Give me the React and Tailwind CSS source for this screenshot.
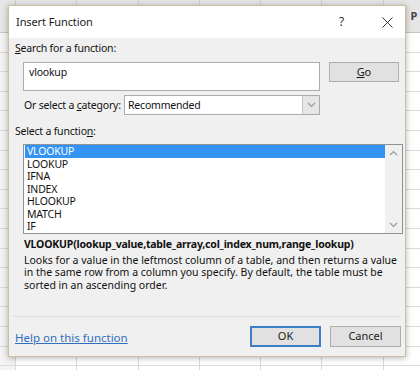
import React from 'react';

const cols = [0, 1, 2, 3, 4, 5, 6];
const rows = Array.from({ length: 18 }, (_, i) => i);

const functions = ['VLOOKUP', 'LOOKUP', 'IFNA', 'INDEX', 'HLOOKUP', 'MATCH', 'IF'];

const Chevron = ({ up }) => (
  <svg width="9" height="6" viewBox="0 0 9 6" fill="none">
    <path d={up ? 'M1 5 L4.5 1.5 L8 5' : 'M1 1 L4.5 4.5 L8 1'} stroke="#9a9a9a" strokeWidth="1.2" />
  </svg>
);

const Sheet = () => (
  <div className="absolute inset-0 flex flex-col bg-white">
    <div className="flex h-[33px] shrink-0 border-b border-[#c6c6c6] bg-[#e6e6e6]">
      <div className="w-[15px] shrink-0" />
      {cols.map((c) => (
        <div key={c} className="flex w-[61.3px] shrink-0 items-center justify-center border-l border-[#cfcfcf] text-[11px] font-bold text-[#444]">
          {c === 6 ? 'P' : ''}
        </div>
      ))}
    </div>
    {rows.map((r) => (
      <div key={r} className="flex h-[19.6px] shrink-0 border-b border-[#dadada]">
        <div className="w-[15px] shrink-0 bg-[#f3f3f3]" />
        {cols.map((c) => (
          <div key={c} className="w-[61.3px] shrink-0 border-l border-[#dadada]" />
        ))}
      </div>
    ))}
  </div>
);

const Button = ({ children, focused, className }) => (
  <div
    className={`flex items-center justify-center bg-[#e1e1e1] text-[11px] text-[#1b1b1b] ${
      focused ? 'border-2 border-[#3c7fc4]' : 'border border-[#adadad]'
    } ${className}`}
  >
    {children}
  </div>
);

const App = () => {
  return (
    <div
      className="relative h-[370px] w-[420px] overflow-hidden bg-white"
      style={{ fontFamily: '"Segoe UI", "Noto Sans", "Open Sans", sans-serif' }}
    >
      <Sheet />

      <div className="absolute left-[8px] top-[5px] flex h-[352px] w-[398px] flex-col border border-[#cdbf9f] bg-[#f0f0f0] shadow-[0_1px_6px_rgba(0,0,0,0.3)]">
        {/* title bar */}
        <div className="flex h-[32px] shrink-0 items-center bg-white pl-[7px] text-[11px] tracking-[-0.1px] text-[#1b1b1b]">
          <span>Insert Function</span>
          <span className="ml-auto mr-[38px] text-[12px] text-[#333]">?</span>
          <svg className="mr-[12px]" width="11" height="11" viewBox="0 0 11 11">
            <path d="M0.5 0.5 L10.5 10.5 M10.5 0.5 L0.5 10.5" stroke="#333" strokeWidth="1" />
          </svg>
        </div>

        <div className="flex flex-col whitespace-nowrap px-[6px] text-[10.5px] leading-[12.5px] tracking-[-0.2px] text-[#111]">
          <div className="mt-[4px] h-[13px]">
            <span className="underline">S</span>earch for a function:
          </div>

          <div className="mt-[7px] flex items-start">
            <div className="ml-[8px] h-[29px] w-[299px] border border-[#a9abb1] bg-white pl-[5px] pt-[3px]">vlookup</div>
            <Button className="ml-[9px] h-[20px] w-[71px]">
              <span className="underline">G</span>o
            </Button>
          </div>

          <div className="mt-[4px] flex h-[20px] items-center">
            <span className="ml-[9px]">
              Or select a <span className="underline">c</span>ategory:
            </span>
            <div className="ml-auto mr-[79px] flex h-[20px] w-[196px] items-center border border-[#a9abb1] bg-white">
              <span className="pl-[3px]">Recommended</span>
              <div className="ml-auto flex h-full w-[17px] items-center justify-center border-l border-[#c4c4c4] bg-[#e6e6e6]">
                <Chevron />
              </div>
            </div>
          </div>

          <div className="mt-[10px] h-[13px]">
            Select a functio<span className="underline">n</span>:
          </div>

          <div className="ml-[8px] mt-[6px] flex h-[90px] w-[380px] border border-[#8e9299] bg-white">
            <div className="flex flex-1 flex-col pl-[1px]">
              {functions.map((f, i) => (
                <div
                  key={f}
                  className={`h-[12.5px] pl-[2px] leading-[12.5px] ${i === 0 ? 'bg-[#3393f3] text-white' : ''}`}
                >
                  {f}
                </div>
              ))}
            </div>
            <div className="flex w-[17px] flex-col items-center justify-between bg-[#f0f0f0] py-[5px]">
              <Chevron up />
              <Chevron />
            </div>
          </div>

          <div className="ml-[9px] mt-[4px] font-bold">VLOOKUP(lookup_value,table_array,col_index_num,range_lookup)</div>
          <div className="ml-[9px] mt-[3px] tracking-normal">
            Looks for a value in the leftmost column of a table, and then returns a value
            <br />
            in the same row from a column you specify. By default, the table must be
            <br />
            sorted in an ascending order.
          </div>
        </div>

        <div className="mx-[4px] mt-auto border-t border-[#dcdcdc]" />

        <div className="flex h-[39px] items-center pb-[1px] pl-[6px] pr-[4px] text-[11.5px]">
          <span className="mt-[3px] text-[#2f6fc0] underline">Help on this function</span>
          <Button focused className="ml-auto h-[21px] w-[71px]">OK</Button>
          <Button className="ml-[9px] h-[21px] w-[71px]">Cancel</Button>
        </div>
      </div>
    </div>
  );
};

export default App;
